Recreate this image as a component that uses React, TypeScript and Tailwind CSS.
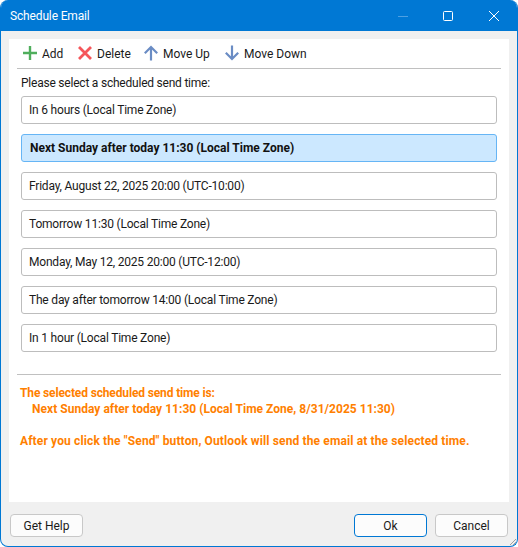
import React from "react";

const rows = [
  "In 6 hours (Local Time Zone)",
  "Next Sunday after today 11:30 (Local Time Zone)",
  "Friday, August 22, 2025 20:00 (UTC-10:00)",
  "Tomorrow 11:30 (Local Time Zone)",
  "Monday, May 12, 2025 20:00 (UTC-12:00)",
  "The day after tomorrow 14:00 (Local Time Zone)",
  "In 1 hour (Local Time Zone)",
];

function ToolItem({ icon, label, className }: { icon: React.ReactNode; label: string; className: string }) {
  return (
    <div className={"flex items-center " + className}>
      <span className="w-[16px] h-[16px] block">{icon}</span>
      <span className="pt-[1px]">{label}</span>
    </div>
  );
}

export default function App() {
  return (
    <div className="w-[518px] h-[547px] bg-white overflow-hidden">
      <div className="w-[518px] h-[547px] rounded-[8px] border border-[#0078d4] border-t-0 bg-[#f0f0f0] flex flex-col overflow-hidden text-[12px] text-[#1a1a1a] font-['Roboto','Noto_Sans',sans-serif] relative">
        <div className="h-[31px] bg-[#0078d4] text-white flex items-center pl-[10px] shrink-0 -mx-px">
          <span className="text-[12px] tracking-[-0.15px]">Schedule Email</span>
          <div className="ml-auto flex items-center">
            <svg width="10" height="12" viewBox="0 0 10 12" className="mr-[35px]"><path d="M0 6.5H10" stroke="#4da0e3" strokeWidth="1" /></svg>
            <svg width="10" height="10" viewBox="0 0 10 10" className="mr-[36px]"><rect x="0.5" y="0.5" width="9" height="9" rx="1" fill="none" stroke="#fff" strokeWidth="1" /></svg>
            <svg width="10" height="10" viewBox="0 0 10 10" className="mr-[19px]"><path d="M0 0L10 10M10 0L0 10" stroke="#fff" strokeWidth="1" /></svg>
          </div>
        </div>
        <div className="mx-[8px] mt-[8px] h-[463px] bg-white px-[8px] flex flex-col shrink-0">
          <div className="h-[30px] border-b border-[#c0c0c0] flex items-center shrink-0 pl-[5px] pb-[1px]">
            <ToolItem label="Add" className="gap-[4px] w-[55px]" icon={<svg viewBox="0 0 16 16" width="16" height="16"><path d="M8 1V15M1 8H15" stroke="#4fae5c" strokeWidth="2.4" /></svg>} />
            <ToolItem label="Delete" className="gap-[4px] w-[66px]" icon={<svg viewBox="0 0 16 16" width="16" height="16"><path d="M2 2L14 14M14 2L2 14" stroke="#f5565a" strokeWidth="2.8" /></svg>} />
            <ToolItem label="Move Up" className="gap-[4px] w-[81px]" icon={<svg viewBox="0 0 16 16" width="16" height="16"><path d="M8 15.5V2.5M1.8 8.2L8 2L14.2 8.2" stroke="#6a8cc4" strokeWidth="2.2" fill="none" /></svg>} />
            <ToolItem label="Move Down" className="gap-[4px]" icon={<svg viewBox="0 0 16 16" width="16" height="16"><path d="M8 0.5V13.5M1.8 7.8L8 14L14.2 7.8" stroke="#6a8cc4" strokeWidth="2.2" fill="none" /></svg>} />
          </div>
          <div className="h-[27px] flex items-center pl-[4px] pt-[1px] shrink-0 tracking-[-0.22px]">Please select a scheduled send time:</div>
          <div className="flex flex-col gap-[10px] px-[4px] shrink-0">
            {rows.map((r, i) => (
              <div
                key={r}
                className={
                  i === 1
                    ? "h-[28px] rounded-[3px] border border-[#66b5f5] bg-[#cce8ff] font-bold flex items-center pl-[8px] text-[#111]"
                    : "h-[28px] rounded-[3px] border border-[#bdbdbd] bg-white flex items-center pl-[7px] tracking-[-0.2px]"
                }
              >
                {r}
              </div>
            ))}
          </div>
          <div className="mt-[22px] border-b border-[#c0c0c0] shrink-0" />
          <div className="mt-[9px] pl-[3px] text-[#ff8000] font-bold leading-[16px] flex flex-col">
            <div className="h-[16px] mt-[1px] tracking-[-0.14px]">The selected scheduled send time is:</div>
            <div className="h-[16px] pl-[12px] tracking-[0.03px]">Next Sunday after today 11:30 (Local Time Zone, 8/31/2025 11:30)</div>
            <div className="h-[16px]" />
            <div className="h-[16px] whitespace-nowrap tracking-[0.13px]">After you click the "Send" button, Outlook will send the email at the selected time.</div>
          </div>
        </div>
        <div className="flex items-center pl-[9px] pr-[9px] mt-[12px] shrink-0">
          <button className="w-[73px] h-[23px] rounded-[4px] border border-[#c8c8c8] bg-[#fcfcfc] flex items-center justify-center">Get Help</button>
          <button className="w-[73px] h-[23px] ml-auto rounded-[4px] border border-[#0078d4] bg-[#fcfcfc] flex items-center justify-center">Ok</button>
          <button className="w-[73px] h-[23px] ml-[8px] rounded-[4px] border border-[#c8c8c8] bg-[#fcfcfc] flex items-center justify-center">Cancel</button>
        </div>
        <svg width="10" height="10" viewBox="0 0 10 10" className="absolute right-0 bottom-0"><path d="M9 3L3 9M9 6L6 9" stroke="#a0a0a0" strokeWidth="1" /></svg>
      </div>
    </div>
  );
}
